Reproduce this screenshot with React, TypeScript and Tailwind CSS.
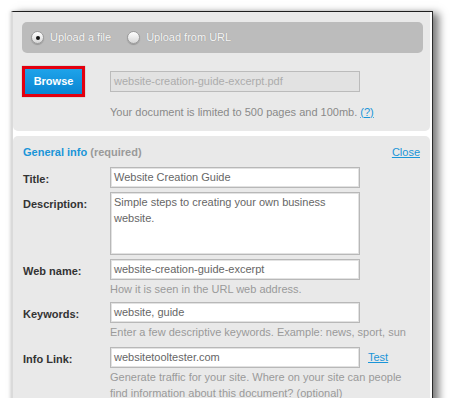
const Radio = ({ checked, label }: { checked?: boolean; label: string }) => {
  return (
    <label className="flex items-center gap-[6px] text-[#f7f7f7] [text-shadow:0_0_1px_rgba(0,0,0,0.3)]">
      <span className="w-[13px] h-[13px] rounded-full border border-[#9a9a9a] bg-[linear-gradient(#ffffff,#d6d6d6)] flex items-center justify-center shadow-[0_1px_1px_rgba(0,0,0,0.2)]">
        {checked && <span className="w-[4px] h-[4px] rounded-full bg-[#111]"></span>}
      </span>
      {label}
    </label>
  )
}

const Row = ({ label, children }: { label: string; children: React.ReactNode }) => {
  return (
    <div className="flex">
      <div className="w-[87px] shrink-0 pt-[4px] font-bold text-[#333]">{label}</div>
      <div className="flex-1">{children}</div>
    </div>
  )
}

const Field = ({ value }: { value: string }) => (
  <div className="w-[250px] h-[21px] bg-white border border-[#b8b8b8] shadow-[inset_0_0_0_1px_#e2e2e2] px-[3px] leading-[19px] text-[#666]">
    {value}
  </div>
)

const Hint = ({ children }: { children: React.ReactNode }) => (
  <p className="text-[#9a9a9a] leading-[16px] pt-[1px]">{children}</p>
)

export default function App() {
  return (
    <div className="w-[450px] h-[398px] overflow-hidden bg-white font-['Liberation_Sans',Arial,sans-serif] text-[11px]">
      <div className="ml-[11px] mt-[11px] w-[422px] h-[400px] bg-white border-t border-t-[#1e1e1e] border-l-2 border-l-[#dadada] border-r border-r-[#2a2a2a] pr-[2px] shadow-[6px_2px_8px_rgba(0,0,0,0.5),-1px_0_3px_rgba(0,0,0,0.12)]">
        <div className="bg-[#e9e9e9] rounded-b-[5px] pt-[10px] pl-[9px] pr-[7px] pb-[12px]">
          <div className="h-[31px] rounded-[5px] bg-[#bcbcbc] flex items-center gap-[16px] pl-[9px]">
            <Radio checked label="Upload a file" />
            <Radio label="Upload from URL" />
          </div>
          <div className="flex items-center mt-[13px]">
            <div className="w-[63px] h-[31px] border-[3px] border-[#e3000f] shadow-[0_0_1px_rgba(0,0,0,0.4)]">
              <button className="w-full h-full bg-[linear-gradient(#1ea3ea,#0a86d2)] text-white font-bold text-[11px]">Browse</button>
            </div>
            <div className="ml-[25px] w-[250px] h-[21px] bg-[#e2e2e2] border border-[#bbbbbb] px-[3px] leading-[19px] text-[#acacac]">
              website-creation-guide-excerpt.pdf
            </div>
          </div>
          <p className="ml-[88px] mt-[8px] text-[#8a8a8a] leading-[14px]">
            Your document is limited to 500 pages and 100mb. <span className="text-[#1a95d8] underline">(?)</span>
          </p>
        </div>
        <div className="mt-[5px] bg-[#e9e9e9] rounded-t-[5px] h-[300px] pt-[9px] pl-[10px] pr-[10px]">
          <div className="flex justify-between leading-[14px]">
            <p className="font-bold text-[#1a95d8]">General info <span className="text-[#9a9a9a]">(required)</span></p>
            <a className="text-[#1a95d8] underline">Close</a>
          </div>
          <div className="mt-[8px] flex flex-col">
            <Row label="Title:">
              <Field value="Website Creation Guide" />
            </Row>
            <div className="mt-[4px]">
              <Row label="Description:">
                <div className="w-[250px] h-[63px] bg-white border border-[#b8b8b8] shadow-[inset_0_0_0_1px_#e2e2e2] px-[3px] py-[1px] leading-[16px] text-[#666]">
                  Simple steps to creating your own business website.
                </div>
              </Row>
            </div>
            <div className="mt-[4px]">
              <Row label="Web name:">
                <Field value="website-creation-guide-excerpt" />
                <Hint>How it is seen in the URL web address.</Hint>
              </Row>
            </div>
            <div className="mt-[5px]">
              <Row label="Keywords:">
                <Field value="website, guide" />
                <Hint>Enter a few descriptive keywords. Example: news, sport, sun</Hint>
              </Row>
            </div>
            <div className="mt-[7px]">
              <Row label="Info Link:">
                <div className="flex items-center">
                  <Field value="websitetooltester.com" />
                  <a className="ml-[8px] text-[#1a95d8] underline">Test</a>
                </div>
                <Hint>
                  Generate traffic for your site. Where on your site can people
                  <br />
                  find information about this document? (optional)
                </Hint>
              </Row>
            </div>
          </div>
        </div>
      </div>
    </div>
  )
}
